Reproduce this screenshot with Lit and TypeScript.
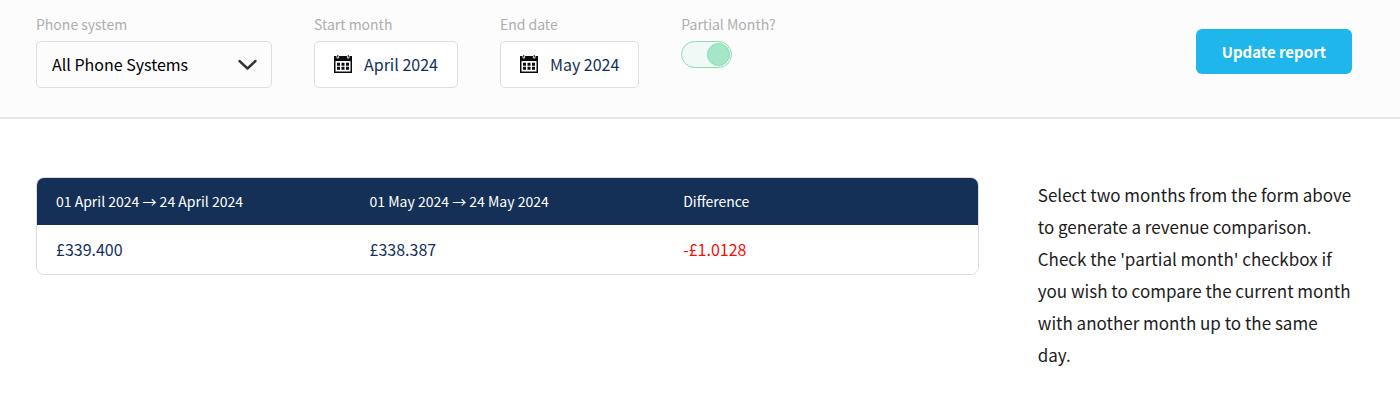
import { LitElement, html, css, svg } from "lit";
import { customElement, property, state } from "lit/decorators.js";

const calendarIcon = svg`
  <svg class="calendar" viewBox="0 0 18 18" width="18" height="18" aria-hidden="true">
    <path fill="#0b0b0f" fill-rule="evenodd"
      d="M0 1h2.5v1.2a1.3 1.3 0 0 0 2.6 0V1h7.8v1.2a1.3 1.3 0 0 0 2.6 0V1H18v17H0zM1.5 6v10.5h15V6z"/>
    <path fill="#0b0b0f"
      d="M3.3 0h1v2.6h-1zM13.7 0h1v2.6h-1zM3 7.8h3v3H3zM7.5 7.8h3v3h-3zM12 7.8h3v3h-3zM3 11.8h3v3H3zM7.5 11.8h3v3h-3zM12 11.8h3v3h-3z"/>
  </svg>`;

interface Column {
  heading: string;
  value: string;
  negative?: boolean;
}

@customElement("report-filters")
export class ReportFilters extends LitElement {
  @state() private partial = true;

  static styles = css`
    :host {
      display: block;
      background: #fcfcfc;
      border-bottom: 2px solid #e6e6e6;
    }
    .bar {
      display: flex;
      align-items: flex-start;
      gap: 42px;
      padding: 12px 48px 29px 36px;
    }
    .field {
      display: flex;
      flex-direction: column;
      align-items: flex-start;
      gap: 5px;
    }
    .label {
      font-size: 14px;
      line-height: 24px;
      color: #aeaeae;
      white-space: nowrap;
    }
    .control {
      box-sizing: border-box;
      height: 47px;
      border: 1px solid #dedede;
      border-radius: 5px;
      font: inherit;
      font-size: 16px;
      line-height: 24px;
      white-space: nowrap;
    }
    .picker {
      display: grid;
      align-items: center;
    }
    .select {
      grid-area: 1 / 1;
      width: 236px;
      padding: 0 48px 2px 15px;
      appearance: none;
      background: transparent;
      color: #000;
    }
    .chevron {
      grid-area: 1 / 1;
      justify-self: end;
      margin-right: 15px;
      pointer-events: none;
    }
    .month {
      display: flex;
      align-items: center;
      gap: 12px;
      padding: 0 19px 2px;
      background: #fff;
      color: #14305a;
    }
    .calendar {
      flex: none;
    }
    .toggle {
      box-sizing: border-box;
      display: flex;
      justify-content: flex-start;
      align-items: center;
      appearance: none;
      width: 51px;
      height: 27px;
      margin: 0;
      padding: 1px;
      border: 1px solid #d0d0d0;
      border-radius: 14px;
      background: #f4f4f4;
    }
    .toggle::before {
      content: "";
      box-sizing: border-box;
      width: 23px;
      height: 23px;
      border: 1px solid #c0c0c0;
      border-radius: 50%;
      background: #d0d0d0;
    }
    .toggle:checked {
      justify-content: flex-end;
      border-color: #8bdcb5;
      background: #f0f9f6;
    }
    .toggle:checked::before {
      border-color: #8bdcb5;
      background: #a5e6c6;
    }
    .submit {
      margin: 17px 0 0 auto;
      padding: 11px 26px 10px;
      border: 0;
      border-radius: 6px;
      background: #1fb6eb;
      color: #fff;
      font: inherit;
      font-size: 15px;
      line-height: 24px;
      font-weight: 700;
      white-space: nowrap;
    }
  `;

  render() {
    return html`
      <form class="bar" @submit=${(e: Event) => e.preventDefault()}>
        <div class="field">
          <label class="label" for="system">Phone system</label>
          <div class="picker">
            <select class="control select" id="system">
              <option>All Phone Systems</option>
            </select>
            <svg class="chevron" width="19" height="12" viewBox="0 0 19 12" aria-hidden="true">
              <path d="M1.5 2l8 7.5 8-7.5" fill="none" stroke="#333" stroke-width="2.4" stroke-linecap="round" stroke-linejoin="round"/>
            </svg>
          </div>
        </div>
        <div class="field">
          <label class="label" for="start">Start month</label>
          <button class="control month" id="start" type="button">${calendarIcon}<span>April 2024</span></button>
        </div>
        <div class="field">
          <label class="label" for="end">End date</label>
          <button class="control month" id="end" type="button">${calendarIcon}<span>May 2024</span></button>
        </div>
        <div class="field">
          <label class="label" for="partial">Partial Month?</label>
          <input class="toggle" id="partial" type="checkbox" .checked=${this.partial}
            @change=${(e: Event) => (this.partial = (e.target as HTMLInputElement).checked)} />
        </div>
        <button class="submit" type="submit">Update report</button>
      </form>
    `;
  }
}

@customElement("revenue-table")
export class RevenueTable extends LitElement {
  @property({ attribute: false }) columns: Column[] = [];

  static styles = css`
    :host {
      display: block;
      border: 1px solid #dadbe4;
      border-radius: 8px;
      overflow: hidden;
    }
    .table {
      width: 100%;
      table-layout: fixed;
      border-collapse: collapse;
      text-align: left;
      line-height: 24px;
    }
    .heading {
      padding: 11px 19px 12px;
      background: #143056;
      color: #fff;
      font-size: 14px;
      font-weight: 400;
    }
    .value {
      padding: 12px 19px 13px;
      background: #fff;
      color: #14305a;
      font-size: 16px;
    }
    .negative {
      color: #f80c0c;
    }
  `;

  render() {
    return html`
      <table class="table">
        <thead>
          <tr>${this.columns.map((c) => html`<th class="heading" scope="col">${c.heading}</th>`)}</tr>
        </thead>
        <tbody>
          <tr>${this.columns.map((c) => html`<td class="value ${c.negative ? "negative" : ""}">${c.value}</td>`)}</tr>
        </tbody>
      </table>
    `;
  }
}

@customElement("app-root")
export class AppRoot extends LitElement {
  private columns: Column[] = [
    { heading: "01 April 2024 → 24 April 2024", value: "£339.400" },
    { heading: "01 May 2024 → 24 May 2024", value: "£338.387" },
    { heading: "Difference", value: "-£1.0128", negative: true },
  ];

  static styles = css`
    :host {
      display: block;
      min-height: 100vh;
      background: #fff;
      font-family: "Source Sans Pro", "Noto Sans CJK JP", "Noto Sans", sans-serif;
    }
    .content {
      display: grid;
      grid-template-columns: minmax(0, 3fr) minmax(0, 1fr);
      align-items: start;
      gap: 59px;
      padding: 58px 48px 32px 36px;
    }
    .help {
      margin: 0;
      padding-top: 2px;
      font-size: 17px;
      line-height: 32px;
      color: #1c1c1c;
    }
  `;

  render() {
    return html`
      <report-filters></report-filters>
      <main class="content">
        <revenue-table .columns=${this.columns}></revenue-table>
        <p class="help">
          Select two months from the form above to generate a revenue comparison. Check the
          'partial month' checkbox if you wish to compare the current month with another month up
          to the same day.
        </p>
      </main>
    `;
  }
}
